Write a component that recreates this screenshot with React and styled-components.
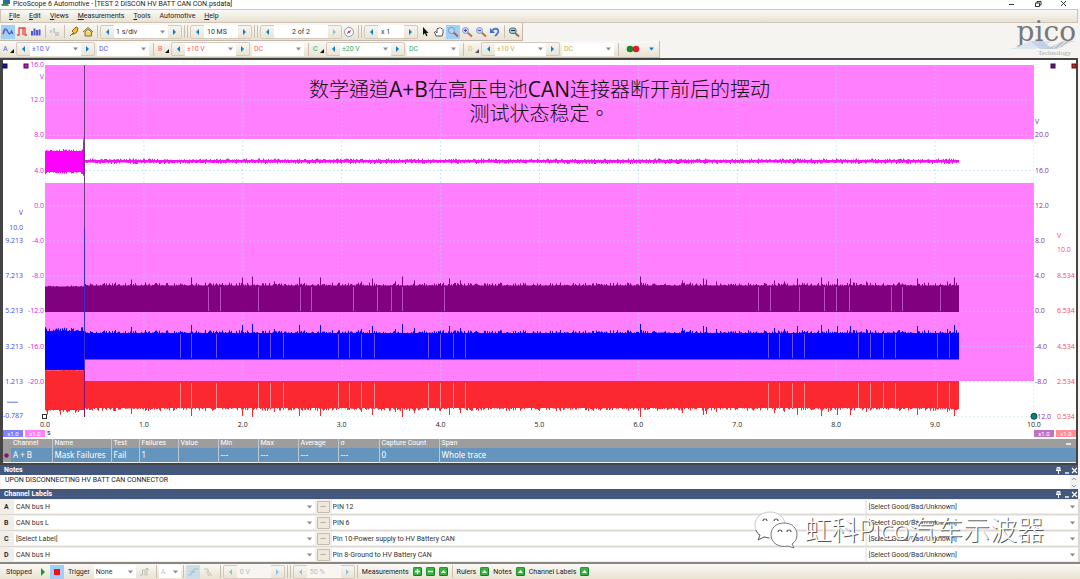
import React from 'react'
import styled, { createGlobalStyle, css } from 'styled-components';

const PLOT_W = 989;
const PLOT_H = 352;
const TRACE_END = 914;
const CUT = 39;

const spikes = [
  [70, 3], [86, 6], [100, 3], [146, 8], [160, 3], [197, 8], [207, 9], [229, 4], [254, 8], [275, 8],
  [316, 4], [327, 7], [350, 4], [357, 9], [369, 5], [404, 7], [415, 5], [470, 2], [515, 3], [595, 9],
  [637, 5], [658, 7], [661, 6], [671, 4], [729, 5], [739, 4], [752, 7], [776, 8], [783, 4], [792, 7],
  [805, 7], [821, 4], [854, 3], [872, 7], [902, 4], [909, 8],
];
const purpleGaps = [163, 175, 213, 255, 266, 308, 332, 346, 357, 399, 713, 725, 754, 779, 791, 804, 846, 857, 895];
const canGaps = [135, 146, 171, 213, 225, 238, 293, 304, 316, 329, 383, 395, 408, 420, 723, 734, 747, 759, 813, 825, 838, 850, 892, 904];

const channels = [
  { id: 'A', color: '#5a5af0', range: '±10 V' },
  { id: 'B', color: '#fb5a62', range: '±10 V' },
  { id: 'C', color: '#2cae60', range: '±20 V' },
  { id: 'D', color: '#d0ac4c', range: '±10 V', off: true },
];

const labelRows = [
  { id: 'A', label: 'CAN bus H', note: 'PIN 12' },
  { id: 'B', label: 'CAN bus L', note: 'PIN 6' },
  { id: 'C', label: '[Select Label]', note: 'Pin 10-Power supply to HV Battery CAN' },
  { id: 'D', label: 'CAN bus H', note: 'Pin 8-Ground to HV Battery CAN' },
];

const statColumns = [
  ['Channel', 'A + B', 41], ['Name', 'Mask Failures', 59], ['Test', 'Fail', 28], ['Failures', '1', 39],
  ['Value', '', 40], ['Min', '---', 40], ['Max', '---', 40], ['Average', '---', 40], ['σ', '---', 41],
  ['Capture Count', '0', 60], ['Span', 'Whole trace', null],
];

// small repeatable noise, so the traces stay the same on every render
const noise = (i, seed) => {
  const v = Math.sin(i * 12.9898 + seed * 78.233) * 43758.5453;
  return v - Math.floor(v);
};

const spikeAt = (x) => {
  const hit = spikes.find((s) => s[0] === x);
  return hit ? hit[1] : 0;
};

// closed band between top and bottom, with noise on one or both edges
const band = (from, to, top, bottom, topNoise, bottomNoise, seed) => {
  const up = [];
  const down = [];
  for (let x = from; x <= to; x++) {
    const n = Math.pow(noise(x, seed), 3);
    const m = Math.pow(noise(x, seed + 5), 3);
    const t = top - Math.max(n * topNoise, topNoise > 2 && x > CUT ? spikeAt(x) : 0);
    const b = bottom + Math.max(m * bottomNoise, bottomNoise > 2 && x > CUT ? spikeAt(x) : 0);
    up.push(`${x},${t.toFixed(1)} ${x + 1},${t.toFixed(1)}`);
    down.unshift(`${x + 1},${b.toFixed(1)} ${x},${b.toFixed(1)}`);
  }
  return [...up, ...down].join(' ');
};

const Arrow = ({ dir = 'left', pale }) => (
  <svg width="5" height="6" viewBox="0 0 5 6">
    <path d={dir === 'left' ? 'M4 0v6L1 3z' : 'M1 0v6L4 3z'} fill={pale ? '#8cc3e6' : '#0c7fc9'} />
  </svg>
);

const Stepper = ({ label, children, pale, paleNext }) => (
  <StepperBox>
    <StepButton aria-label={`Previous ${label}`}><Arrow pale={pale} /></StepButton>
    {children}
    <StepButton aria-label={`Next ${label}`}><Arrow dir="right" pale={pale || paleNext} /></StepButton>
  </StepperBox>
);

const Dropdown = ({ label, id, value, width, color, pad }) => (
  <SelectBox $width={width}>
    <Select id={id} aria-label={label} $color={color} $pad={pad} defaultValue={value}>
      <option>{value}</option>
    </Select>
    <svg width="5" height="4" viewBox="0 0 5 4"><path d="M0 0.5h5L2.5 3.5z" fill="#8b8b8b" /></svg>
  </SelectBox>
);

const Icon = ({ name }) => {
  const shapes = {
    wave: <><path d="M1 8.500L4 3l3 5 4-2" stroke="#d0607a" fill="none" /><path d="M1 8C2 2 4 1.500 5.500 5S8 9 9.500 5L11 8" stroke="#4560d0" strokeWidth="1.200" fill="none" /></>,
    pulse: <path d="M1 9h2V2h4v7M7 2h2v7h2" stroke="#e8434a" fill="none" strokeWidth="1.300" />,
    bars: <path d="M1 9.500V5h2v4.500zM3.500 9.500V2.500h2v7zM6 9.500V4h2v5.500zM8.500 9.500V3.500h2v6z" fill="#4f58d0" />,
    faded: <path d="M1 7V4h2v3zM4 7V2h2v5M6 6h4v4H6z" fill="#c9cacb" />,
    probe: <path d="M2 10l2-2M4 8l2-1-2-2 4-4 2 1-1 4-3 2z" stroke="#8a6a10" fill="#f3c230" />,
    home: <path d="M1 6l5-4.500L11 6M3 6v4h6.500V6L6 3.500z" stroke="#77713f" fill="#f2d56b" />,
    compass: <><circle cx="6" cy="6" r="4.500" fill="#fff" stroke="#9298b4" /><path d="M3.500 8.500l2-4 1.500 1.500z" fill="#4b6bd0" /><path d="M8.500 3.500l-2 4L5 6z" fill="#e04040" /></>,
    cursor: <path d="M4 1v8l2-1.800 1.200 3 1.300-.6L7.300 7H9.500z" fill="#111" />,
    hand: <path d="M3 10L1.500 6l1-.5L4 7V3l1-1 1 .5L7 1.500l1 1 1 0 1 1V7l-1 3z" fill="#fff" stroke="#444" strokeWidth="0.900" />,
    zoom: <><path d="M6.500 6.500L11 10.500" stroke="#a65f4b" strokeWidth="1.800" /><circle cx="4.500" cy="4.500" r="3" fill="#b8d4f4" stroke="#7c8fb8" /></>,
    zoomIn: <><path d="M6.500 6.500L11 10.500" stroke="#b0705a" strokeWidth="1.800" /><circle cx="4.500" cy="4.500" r="3" fill="#c3d6f2" stroke="#8d9cc6" /><path d="M3 4.500h3M4.500 3v3" stroke="#3346a8" strokeWidth="0.900" /></>,
    zoomOut: <><path d="M6.500 6.500L11 10.500" stroke="#b0705a" strokeWidth="1.800" /><circle cx="4.500" cy="4.500" r="3" fill="#c3d6f2" stroke="#8d9cc6" /><path d="M3 4.500h3" stroke="#3346a8" strokeWidth="0.900" /></>,
    undo: <><path d="M3.500 4.500C6 1 10.500 3 9 6.500 8.500 8 7 9 6 10" stroke="#3a6bd8" fill="none" strokeWidth="1.700" /><path d="M1 2v5h5z" fill="#3a6bd8" /></>,
    zoomAll: <><path d="M7 7l4 3.500" stroke="#a65f4b" strokeWidth="1.800" /><rect x="1.500" y="2" width="6.500" height="5.500" rx="2" fill="#9cc" stroke="#4b6f78" /><path d="M3 4.500h4" stroke="#234" /></>,
    step: <path d="M1 9h2.500V4H6v5h2V3M6.500 4L8 2l2 2" stroke="#b9bcb4" fill="none" />,
    rise: <path d="M1 9h3l3-6h4M3 6h5" stroke="#a3bccb" fill="none" />,
    fall: <path d="M1 3h4v6h4M3 7l2-2 3 3" stroke="#c6c4bb" fill="none" />,
    play: <path d="M4 2v8l4-4z" fill="#169a2b" />,
    stop: <path d="M3 3h6v6H3z" fill="#f41010" />,
  };
  return <svg width="12" height="12" viewBox="0 0 12 12">{shapes[name]}</svg>;
};

const GreenButton = ({ label, sign }) => (
  <PlainButton aria-label={label}>
    <svg width="9" height="9" viewBox="0 0 9 9">
      <rect width="9" height="9" rx="1.500" fill="#157d22" />
      <rect x="0.500" y="0.500" width="7.500" height="7.500" rx="1" fill="#39b244" />
      {sign === 'plus' && <path d="M2 4.500h5M4.500 2v5" stroke="#fff" strokeWidth="1.400" />}
      {sign === 'minus' && <path d="M2 4.500h5" stroke="#fff" strokeWidth="1.400" />}
      {sign === 'up' && <path d="M2 6l2.500-3L7 6z" fill="#fff" />}
    </svg>
  </PlainButton>
);

const PanelHeader = ({ title }) => (
  <HeaderBar>
    <h2>{title}</h2>
    <PlainButton aria-label={`Pin ${title}`}>
      <svg width="7" height="7" viewBox="0 0 7 7"><path d="M2 0.500h3v3H2zM1 3.500h5M3.500 3.500V7" stroke="#fff" fill="#9fb0d0" /></svg>
    </PlainButton>
    <PlainButton aria-label={`Minimise ${title}`}>
      <svg width="7" height="7" viewBox="0 0 7 7"><path d="M2 6h4" stroke="#fff" strokeWidth="1.400" /></svg>
    </PlainButton>
    <PlainButton aria-label={`Close ${title}`}>
      <svg width="7" height="7" viewBox="0 0 7 7"><path d="M1 1l5 5M6 1L1 6" stroke="#fff" strokeWidth="1.200" /></svg>
    </PlainButton>
  </HeaderBar>
);

// ticks: [text, tenths of the axis height from the top]
const Axis = ({ ticks, color, x, anchor }) => (
  <g fill={color} textAnchor={anchor}>
    {ticks.map(([text, pos]) => (
      <text key={text + pos} x={x} y={`${pos * 10}%`} dy="2">{text}</text>
    ))}
  </g>
);

const every = (values, start = 0) => values.map((v, i) => [v, start + i]);

function Scope() {
  return (
    <ChartRow>
      <AxisSvg>
        <Axis color="#4646ef" x="20" anchor="end" ticks={[['V', 4.2], ['10.0', 4.63], ...every(['9.213', '7.213', '5.213', '3.213', '1.213'], 5), ['-0.787', 9.97]]} />
        <Axis color="#e020e0" x="41" anchor="end" ticks={[['V', 0.33], ...every(['16.0', '12.0', '8.0', '4.0', '0.0', '-4.0', '-8.0', '-12.0', '-16.0', '-20.0'])]} />
        <rect x="0" y="-1" width="4" height="4" fill="#1010c0" stroke="#101040" />
        <rect x="21" y="-1" width="4" height="4" fill="#d010d0" stroke="#401040" />
        <line x1="4" x2="15" y1="95.800%" y2="95.800%" stroke="#6a6af0" />
      </AxisSvg>
      <PlotColumn>
        <PlotSvg viewBox={`0 0 ${PLOT_W} ${PLOT_H}`} preserveAspectRatio="none">
          <rect width={PLOT_W} height="74" fill="#ff7fff" />
          <rect y="118" width={PLOT_W} height="198" fill="#ff7fff" />
          <g stroke="#a8d6ea" strokeOpacity="0.600" strokeDasharray="2 2">
            {Array.from({ length: 11 }, (_, i) => (
              <React.Fragment key={i}>
                <line x1={i * 98.9} x2={i * 98.9} y1="0" y2={PLOT_H} />
                <line x1="0" x2={PLOT_W} y1={i * 35.2} y2={i * 35.2} />
              </React.Fragment>
            ))}
          </g>
          <polygon points={band(0, CUT - 1, 86, 107, 2, 2, 1)} fill="#ff00ff" />
          <polygon points="38,98 38,78 39,70 40,98 40,113 38,110" fill="#e000d8" />
          <polygon points={band(CUT, TRACE_END - 1, 95, 97.5, 1.5, 1.5, 2)} fill="#f410f4" />
          <polygon points={band(0, CUT - 1, 221.5, 247, 1, 0, 3)} fill="#800080" />
          <polygon points={band(CUT, TRACE_END - 1, 220.5, 247, 3, 0, 4)} fill="#800080" />
          <polygon points={band(0, CUT - 1, 266, 305, 4, 0, 6)} fill="#0000ff" />
          <polygon points={band(CUT, TRACE_END - 1, 268, 294.5, 3, 0, 4)} fill="#0000ff" />
          <polygon points={band(0, CUT - 1, 305.5, 345, 1, 5, 8)} fill="#fc2830" />
          <polygon points={band(CUT, TRACE_END - 1, 316, 343, 0, 3, 4)} fill="#fc2830" />
          {purpleGaps.map((x) => <rect key={x} x={x} y="222" width="1" height="24" fill="#b84fc0" />)}
          {canGaps.map((x) => (
            <React.Fragment key={x}>
              <rect x={x} y="269" width="1" height="24" fill="#6c50f8" />
              <rect x={x} y="318" width="1" height="25" fill="#ff8a92" />
            </React.Fragment>
          ))}
          <rect x="39" width="1" height={PLOT_H} fill="#6f3f86" />
          <rect x="39" y="162" width="1" height="190" fill="#3a30c8" />
          <rect x="39" y="305" width="1" height="47" fill="#8a1070" />
        </PlotSvg>
        <TimeAxis>
          {Array.from({ length: 11 }, (_, i) => <span key={i}>{i.toFixed(1)}</span>)}
        </TimeAxis>
      </PlotColumn>
      <AxisSvg>
        <Axis color="#8c2f96" x="1" ticks={[['V', 1.62], ...every(['20.0', '16.0', '12.0', '8.0', '4.0', '0.0', '-4.0', '-8.0', '-12.0'], 2)]} />
        <Axis color="#fb4a52" x="23" ticks={[['V', 4.87], ['10.0', 5.26], ...every(['8.534', '6.534', '4.534', '2.534', '0.534'], 6)]} />
        <rect x="17" y="-1" width="4" height="4" fill="#701080" stroke="#301040" />
        <rect x="38" y="-1" width="4" height="4" fill="#e02020" stroke="#501010" />
        <circle cx="0" cy="99.800%" r="3" fill="#0b8080" stroke="#064848" />
      </AxisSvg>
      <OriginMark />
      <Caption>
        数学通道<b>A+B</b>在高压电池<b>CAN</b>连接器断开前后的摆动<br />测试状态稳定。
      </Caption>
    </ChartRow>
  );
}

function App() {
  return (
    <Page>
      <GlobalStyle />
      <TitleBar>
        <svg width="10" height="7" viewBox="0 0 10 7"><path d="M2 0h7v4H2z" fill="#2a6f9c" /><path d="M0 4h7l1 2H1z" fill="#3d9c46" /></svg>
        <h1>PicoScope 6 Automotive - [TEST 2 DISCON HV BATT CAN CON.psdata]</h1>
        <WindowButtons>
          <PlainButton aria-label="Minimise"><svg width="8" height="7" viewBox="0 0 8 7"><path d="M1 3.500h5" stroke="#333" /></svg></PlainButton>
          <PlainButton aria-label="Restore"><svg width="8" height="7" viewBox="0 0 8 7"><path d="M1.500 2h4v3.500h-4zM3 2V0.500h4V4H5.500" stroke="#333" fill="none" /></svg></PlainButton>
          <PlainButton aria-label="Close"><svg width="8" height="7" viewBox="0 0 8 7"><path d="M1 0l5 5M6 0L1 5" stroke="#333" /></svg></PlainButton>
        </WindowButtons>
      </TitleBar>
      <MenuBar>
        {['File', 'Edit', 'Views', 'Measurements', 'Tools', 'Automotive', 'Help'].map((m) => (
          <MenuButton key={m}>{m === 'Automotive' ? m : <><u>{m[0]}</u>{m.slice(1)}</>}</MenuButton>
        ))}
      </MenuBar>
      <ToolArea>
        <div>
          <Toolbar>
            <ToolButton $active aria-label="Scope mode"><Icon name="wave" /></ToolButton>
            <ToolButton aria-label="Persistence mode"><Icon name="pulse" /></ToolButton>
            <ToolButton aria-label="Spectrum mode"><Icon name="bars" /></ToolButton>
            <Divider />
            <ToolButton aria-label="Masks"><Icon name="faded" /></ToolButton>
            <Divider />
            <ToolButton aria-label="Auto setup"><Icon name="probe" /></ToolButton>
            <ToolButton aria-label="Home"><Icon name="home" /></ToolButton>
            <Divider />
            <Stepper label="timebase"><Dropdown label="Timebase" value="1 s/div" width={54} /></Stepper>
            <Divider $wide />
            <Stepper label="sample count"><Field aria-label="Samples" defaultValue="10 MS" $width={34} /></Stepper>
            <Divider $wide />
            <Stepper label="buffer" paleNext><Field aria-label="Buffer" defaultValue="2 of 2" $width={54} $center /></Stepper>
            <ToolButton aria-label="Buffer overview"><Icon name="compass" /></ToolButton>
            <Divider $wide />
            <Stepper label="zoom"><Field aria-label="Zoom factor" defaultValue="x 1" $width={26} /></Stepper>
            <ToolButton aria-label="Select"><Icon name="cursor" /></ToolButton>
            <ToolButton aria-label="Hand"><Icon name="hand" /></ToolButton>
            <ToolButton $active aria-label="Zoom window"><Icon name="zoom" /></ToolButton>
            <ToolButton aria-label="Zoom in"><Icon name="zoomIn" /></ToolButton>
            <ToolButton aria-label="Zoom out"><Icon name="zoomOut" /></ToolButton>
            <ToolButton aria-label="Undo zoom"><Icon name="undo" /></ToolButton>
            <Divider />
            <ToolButton aria-label="Zoom to full view"><Icon name="zoomAll" /></ToolButton>
          </Toolbar>
          <Toolbar>
            {channels.map((c) => (
              <ChannelGroup key={c.id}>
                <ChannelButton $color={c.color} $off={c.off}>
                  {c.id}
                  <svg width="4" height="4" viewBox="0 0 4 4"><path d="M4 0v4H0z" fill="#111" /></svg>
                </ChannelButton>
                <Stepper label={`channel ${c.id} range`}>
                  <Dropdown label={`Channel ${c.id} range`} value={c.range} width={51} color={c.color} />
                </Stepper>
                <Dropdown label={`Channel ${c.id} coupling`} value="DC" width={52} color={c.color} />
                <Divider />
              </ChannelGroup>
            ))}
            <ToolButton $width={24} aria-label="Reference channels">
              <svg width="14" height="8" viewBox="0 0 14 8"><circle cx="4" cy="4" r="3.300" fill="#18862e" /><circle cx="10" cy="4" r="3.300" fill="#e01c28" /></svg>
            </ToolButton>
            <StepButton aria-label="More channel options"><svg width="5" height="4" viewBox="0 0 5 4"><path d="M0 0.500h5L2.500 3.500z" fill="#0c7fc9" /></svg></StepButton>
          </Toolbar>
        </div>
        <Brand>
          <strong>pico</strong>
          <svg viewBox="0 0 68 10" preserveAspectRatio="none">
            <path d="M0 9C14 7 16 0 26 0h20C38 2 36 9 22 9z" fill="#dbe5f2" />
            <path d="M22 0h13l10 9H32z" fill="#c3d2e6" />
            <path d="M36 8C48 7 50 0 58 0h9C60 1 56 8 46 9z" fill="#bfc3c9" />
            <path d="M48 0l-4 4M53 0l-8 8M58 0l-8 8M63 0l-8 6" stroke="#f5f4f0" />
          </svg>
          <small>Technology</small>
        </Brand>
      </ToolArea>

      <Workspace>
        <Scope />
        <ScaleRow>
          <ScaleChip $color="#8080ff">x1.0</ScaleChip>
          <ScaleChip $color="#ff80f8">x1.0</ScaleChip>
          <span>s</span>
          <ScaleChip $color="#bf72bf">x1.0</ScaleChip>
          <ScaleChip $color="#ff8f94">x1.0</ScaleChip>
        </ScaleRow>
        <StatTable>
          <colgroup>
            <col style={{ width: 8 }} />
            {statColumns.map(([name, , width]) => <col key={name} style={width ? { width } : undefined} />)}
            <col style={{ width: 12 }} />
          </colgroup>
          <thead>
            <tr>
              <td />
              {statColumns.map(([name]) => <th key={name}>{name}</th>)}
              <td><PlainButton aria-label="Collapse measurements"><svg width="5" height="3" viewBox="0 0 5 3"><path d="M0 2h5" stroke="#fff" strokeWidth="1.500" /></svg></PlainButton></td>
            </tr>
          </thead>
          <tbody>
            <tr>
              <MarkCell><svg width="5" height="5" viewBox="0 0 5 5"><circle cx="2.500" cy="2.500" r="2.200" fill="#8a1080" /></svg></MarkCell>
              {statColumns.map(([name, value]) => <td key={name}>{value}</td>)}
              <td />
            </tr>
          </tbody>
        </StatTable>
      </Workspace>

      <PanelHeader title="Notes" />
      <NotesBox>
        <textarea aria-label="Notes" defaultValue="UPON DISCONNECTING HV BATT CAN CONNECTOR" />
        <ScrollBar>
          <svg width="6" height="4" viewBox="0 0 6 4"><path d="M1 3l2-2 2 2" stroke="#999" fill="none" /></svg>
          <svg width="6" height="4" viewBox="0 0 6 4"><path d="M1 1l2 2 2-2" stroke="#999" fill="none" /></svg>
        </ScrollBar>
      </NotesBox>
      <PanelHeader title="Channel Labels" />
      <LabelPanel>
        {labelRows.map((row) => (
          <LabelRow key={row.id}>
            <label htmlFor={`label-${row.id}`}>{row.id}</label>
            <Dropdown id={`label-${row.id}`} value={row.label} pad />
            <MoreButton aria-label={`Edit label ${row.id}`}>---</MoreButton>
            <Field aria-label={`Channel ${row.id} notes`} defaultValue={row.note} $tight />
            <Dropdown label={`Channel ${row.id} state`} value="[Select Good/Bad/Unknown]" pad />
          </LabelRow>
        ))}
      </LabelPanel>

      <StatusBar>
        <StatusText>Stopped</StatusText>
        <ToolButton aria-label="Start"><Icon name="play" /></ToolButton>
        <ToolButton $active aria-label="Stop"><Icon name="stop" /></ToolButton>
        <StatusText as="label" htmlFor="trigger">Trigger</StatusText>
        <Dropdown id="trigger" value="None" width={42} />
        <ToolButton $width={18} aria-label="Advanced trigger"><Icon name="step" /></ToolButton>
        <Divider />
        <Dropdown label="Trigger source" value="A" width={22} color="#c4c4c4" />
        <Divider />
        <ToolButton $active $muted aria-label="Rising edge"><Icon name="rise" /></ToolButton>
        <ToolButton $width={18} aria-label="Falling edge"><Icon name="fall" /></ToolButton>
        <Divider />
        <Stepper label="threshold" pale><Field aria-label="Threshold" defaultValue="0 V" $width={34} $muted /></Stepper>
        <Divider $wide />
        <Stepper label="pre-trigger" pale><Field aria-label="Pre-trigger" defaultValue="50 %" $width={34} $muted /></Stepper>
        <Divider />
        <StatusGroup>
          <span>Measurements</span>
          <GreenButton label="Add measurement" sign="plus" />
          <GreenButton label="Remove measurement" sign="minus" />
          <GreenButton label="Edit measurement" sign="up" />
        </StatusGroup>
        <Divider />
        <StatusGroup><span>Rulers</span><GreenButton label="Rulers" sign="up" /></StatusGroup>
        <StatusGroup><span>Notes</span><GreenButton label="Toggle notes" sign="up" /></StatusGroup>
        <StatusGroup><span>Channel Labels</span><GreenButton label="Toggle channel labels" sign="up" /></StatusGroup>
      </StatusBar>

      <Watermark>
        <svg width="44" height="38" viewBox="0 0 44 38">
          <path d="M16 1C7 1 1 7 1 14c0 5 2 8 5 10l-2 5 6-3c10 3 21-2 21-12C31 7 25 1 16 1z" fill="#fff" stroke="#bbb" strokeWidth="0.800" />
          <path d="M2 19c1 3 2 4 4 5l-2 5 6-3 5 1" fill="none" stroke="#666" />
          <path d="M30 12c-8 0-13 5-13 12 0 8 8 13 17 11l6 2-2-4c3-2 5-5 5-9 0-7-5-12-13-12z" fill="#fff" stroke="#777" />
          <path d="M9 10a2 2 0 0 1 4 0M20 10a2 2 0 0 1 4 0M24 21a2 2 0 0 1 4 0M33 21a2 2 0 0 1 4 0" fill="none" stroke="#555" strokeWidth="1.200" />
        </svg>
        <span>虹科Pico汽车示波器</span>
      </Watermark>
    </Page>
  )
}

const GlobalStyle = createGlobalStyle`
  * { box-sizing: border-box; }
  body {
    margin: 0;
    background: #f5f4f0;
    color: #222;
    font-family: Roboto, "Noto Sans CJK SC", sans-serif;
    font-size: 7px;
    line-height: 8px;
  }
  h1, h2 { margin: 0; font: inherit; }
  svg { display: block; flex: none; }
  button, input, select, textarea {
    margin: 0;
    padding: 0;
    border: 0;
    border-radius: 0;
    background: none;
    color: inherit;
    font: inherit;
  }
`;

const Page = styled.main`
  position: relative;
  display: flex;
  flex-direction: column;
  min-height: 100vh;
`;

const TitleBar = styled.header`
  display: flex;
  gap: 2px;
  height: 9px;
  padding: 0 12px 0 1px;
  background: #fff;
`;

const WindowButtons = styled.div`
  display: flex;
  gap: 18px;
  margin-left: auto;
`;

const PlainButton = styled.button`
  display: flex;
  align-items: center;
  justify-content: center;
`;

const chrome = css`
  background: linear-gradient(#faf9f6, #e8e2d2);
`;

const MenuBar = styled.nav`
  display: flex;
  align-items: center;
  gap: 9px;
  height: 14px;
  margin-right: 2px;
  padding-left: 8px;
  border: 1px solid #cfc3b8;
  ${chrome}
`;

const MenuButton = styled.button``;

const ToolArea = styled.section`
  display: flex;
  justify-content: space-between;
  height: 35px;
`;

const Toolbar = styled.div`
  display: flex;
  align-items: center;
  width: max-content;
  height: 18px;
  padding: 1px;
  border-right: 1px solid #c4b8ac;
  border-bottom: 1px solid #c4b8ac;
  ${chrome}

  & + & {
    height: 17px;
  }
`;

const ChannelGroup = styled.div`
  display: flex;
  align-items: center;
  gap: 2px;
`;

const ToolButton = styled.button`
  display: flex;
  align-items: center;
  justify-content: center;
  width: ${(p) => p.$width || 14}px;
  height: 14px;
  background: ${(p) => (p.$active ? (p.$muted ? '#cfdde4' : '#9fd0fa') : 'none')};
`;

const Divider = styled.span`
  width: ${(p) => (p.$wide ? 4 : 1)}px;
  height: 13px;
  margin: 0 2px;
  border-left: 1px solid #cbbfb3;
  border-right: ${(p) => (p.$wide ? '1px solid #cbbfb3' : 0)};
`;

const ChannelButton = styled.button`
  display: flex;
  align-items: flex-end;
  justify-content: space-between;
  width: 13px;
  padding-left: 2px;
  color: ${(p) => p.$color};
  opacity: ${(p) => (p.$off ? 0.7 : 1)};
`;

const StepperBox = styled.div`
  display: flex;
  align-items: center;
  height: 14px;
  border: 1px solid #d3c9bd;
  border-radius: 2px;
`;

const StepButton = styled.button`
  display: flex;
  align-items: center;
  justify-content: center;
  width: 13px;
  height: 12px;
`;

const SelectBox = styled.span`
  display: grid;
  align-items: center;
  width: ${(p) => (p.$width ? `${p.$width}px` : 'auto')};
  height: 13px;
  background: #fff;

  > * {
    grid-area: 1 / 1;
  }

  > svg {
    justify-self: end;
    margin-right: 3px;
    pointer-events: none;
  }
`;

const Select = styled.select`
  appearance: none;
  width: 100%;
  padding: 0 ${(p) => (p.$pad ? 12 : 8)}px 0 2px;
  color: ${(p) => p.$color || '#333'};
`;

const Field = styled.input`
  width: ${(p) => (p.$width ? `${p.$width}px` : '100%')};
  height: 13px;
  padding: 0 ${(p) => (p.$tight ? 1 : 3)}px;
  background: ${(p) => (p.$muted ? '#f7f6f2' : '#fff')};
  color: ${(p) => (p.$muted ? '#bbb' : '#333')};
  text-align: ${(p) => (p.$center ? 'center' : 'left')};
`;

const Brand = styled.div`
  display: flex;
  flex-direction: column;
  align-items: flex-end;
  width: 76px;
  padding-right: 4px;
  color: #77787b;
  font-family: "DejaVu Serif", serif;

  strong {
    font-size: 28px;
    font-weight: 400;
    line-height: 18px;
  }

  svg {
    width: 68px;
    height: 9px;
  }

  small {
    padding-right: 5px;
    color: #aaa;
    font-family: "Liberation Serif", serif;
    font-size: 7px;
    line-height: 7px;
  }
`;

const Workspace = styled.section`
  display: flex;
  flex: 1;
  flex-direction: column;
  margin-right: 2px;
  border: 2px solid #444;
  border-left-width: 3px;
  background: #fff;
`;

const ChartRow = styled.div`
  position: relative;
  display: grid;
  flex: 1;
  grid-template-columns: 42px 1fr 42px;
  padding-top: 5px;
  font-family: "Open Sans", sans-serif;
`;

const AxisSvg = styled.svg`
  width: 100%;
  height: calc(100% - 13px);
  overflow: visible;
`;

const PlotColumn = styled.div`
  display: flex;
  flex-direction: column;
`;

const PlotSvg = styled.svg`
  flex: 1;
  width: 100%;
  height: 0;
  min-height: 200px;
`;

const TimeAxis = styled.div`
  display: flex;
  justify-content: space-between;
  height: 13px;
  margin: 0 -10px;
  padding-top: 4px;

  span {
    width: 20px;
    text-align: center;
  }
`;

const OriginMark = styled.i`
  position: absolute;
  bottom: 11px;
  left: 39px;
  width: 5px;
  height: 5px;
  border: 1px solid #333;
  background: #fff;
`;

const Caption = styled.p`
  position: absolute;
  top: 17px;
  left: 0;
  right: 0;
  margin: 0;
  color: #111;
  font-family: "Noto Sans CJK TC", sans-serif;
  font-size: 20px;
  font-weight: 300;
  line-height: 24px;
  text-align: center;

  b {
    font-family: "Open Sans", sans-serif;
    font-size: 21px;
    font-weight: 400;
  }
`;

const ScaleRow = styled.div`
  display: flex;
  gap: 2px;
  height: 9px;
  line-height: 7px;

  > span:nth-child(3) {
    margin-right: auto;
  }
`;

const ScaleChip = styled.span`
  width: 20px;
  height: 7px;
  background: ${(p) => p.$color};
  color: #fff;
  font-size: 6px;
  text-align: center;
`;

const StatTable = styled.table`
  width: 100%;
  border-collapse: collapse;
  table-layout: fixed;
  border-bottom: 1px solid #e8f0f6;
  color: #fff;

  th, td {
    padding: 0 0 0 2px;
    border-left: 1px solid #bfc8cd;
    font-weight: 400;
    text-align: left;
    white-space: nowrap;
  }

  thead {
    background: #9d9d9d;
    line-height: 9px;
  }

  tbody {
    background: #6595bc;
    font-family: "Noto Sans", sans-serif;
    font-size: 8px;
    line-height: 14px;
  }

  th:nth-child(2), td:nth-child(2), td:first-child, td:last-child {
    border-left: 0;
  }
`;

const MarkCell = styled.td`
  && {
    padding: 0 0 0 1px;
    background: #9d9d9d;
  }
`;

const HeaderBar = styled.header`
  display: flex;
  align-items: center;
  gap: 1px;
  height: 10px;
  margin-right: 2px;
  padding-left: 4px;
  background: #44587c;
  color: #fff;

  h2 {
    flex: 1;
    font-weight: 700;
  }
`;

const NotesBox = styled.div`
  display: flex;
  height: 14px;
  margin: 0 2px 0 1px;
  background: #fff;

  textarea {
    flex: 1;
    padding: 1px 4px;
    overflow: hidden;
    resize: none;
  }
`;

const ScrollBar = styled.div`
  display: flex;
  flex-direction: column;
  align-items: center;
  justify-content: space-around;
  width: 8px;
  background: #f0f0f0;
`;

const LabelPanel = styled.section`
  display: flex;
  flex-direction: column;
  gap: 1px;
  padding: 0 2px 0 0;
  border-bottom: 2px solid #8a8781;
  background: #ddd8d2;
`;

const LabelRow = styled.div`
  display: grid;
  grid-template-columns: 8px 300fr 13px 532fr 211fr;
  align-items: center;
  gap: 2px;
  height: 15px;
  padding-left: 4px;
  background: #f1eeea;

  label {
    font-weight: 600;
  }

  select, input {
    color: #333;
  }
`;

const MoreButton = styled.button`
  height: 12px;
  border: 1px solid #c9bda9;
  border-radius: 1px;
  background: #efe9dc;
  color: #777;
  line-height: 8px;
`;

const StatusBar = styled.footer`
  display: flex;
  align-items: center;
  height: 15px;
  padding-left: 2px;
  ${chrome}
`;

const StatusText = styled.span`
  padding: 0 4px;
`;

const StatusGroup = styled.span`
  display: flex;
  align-items: center;
  gap: 4px;
  padding: 0 2px;
`;

const Watermark = styled.div`
  position: absolute;
  right: 36px;
  bottom: 30px;
  display: flex;
  align-items: center;
  gap: 6px;
  color: #fff;
  font-family: "Open Sans", "Noto Sans CJK SC", sans-serif;
  font-size: 27px;
  font-weight: 300;
  line-height: 38px;
  text-shadow: 1px 1px 0 #555;
  pointer-events: none;
`;

export default App
